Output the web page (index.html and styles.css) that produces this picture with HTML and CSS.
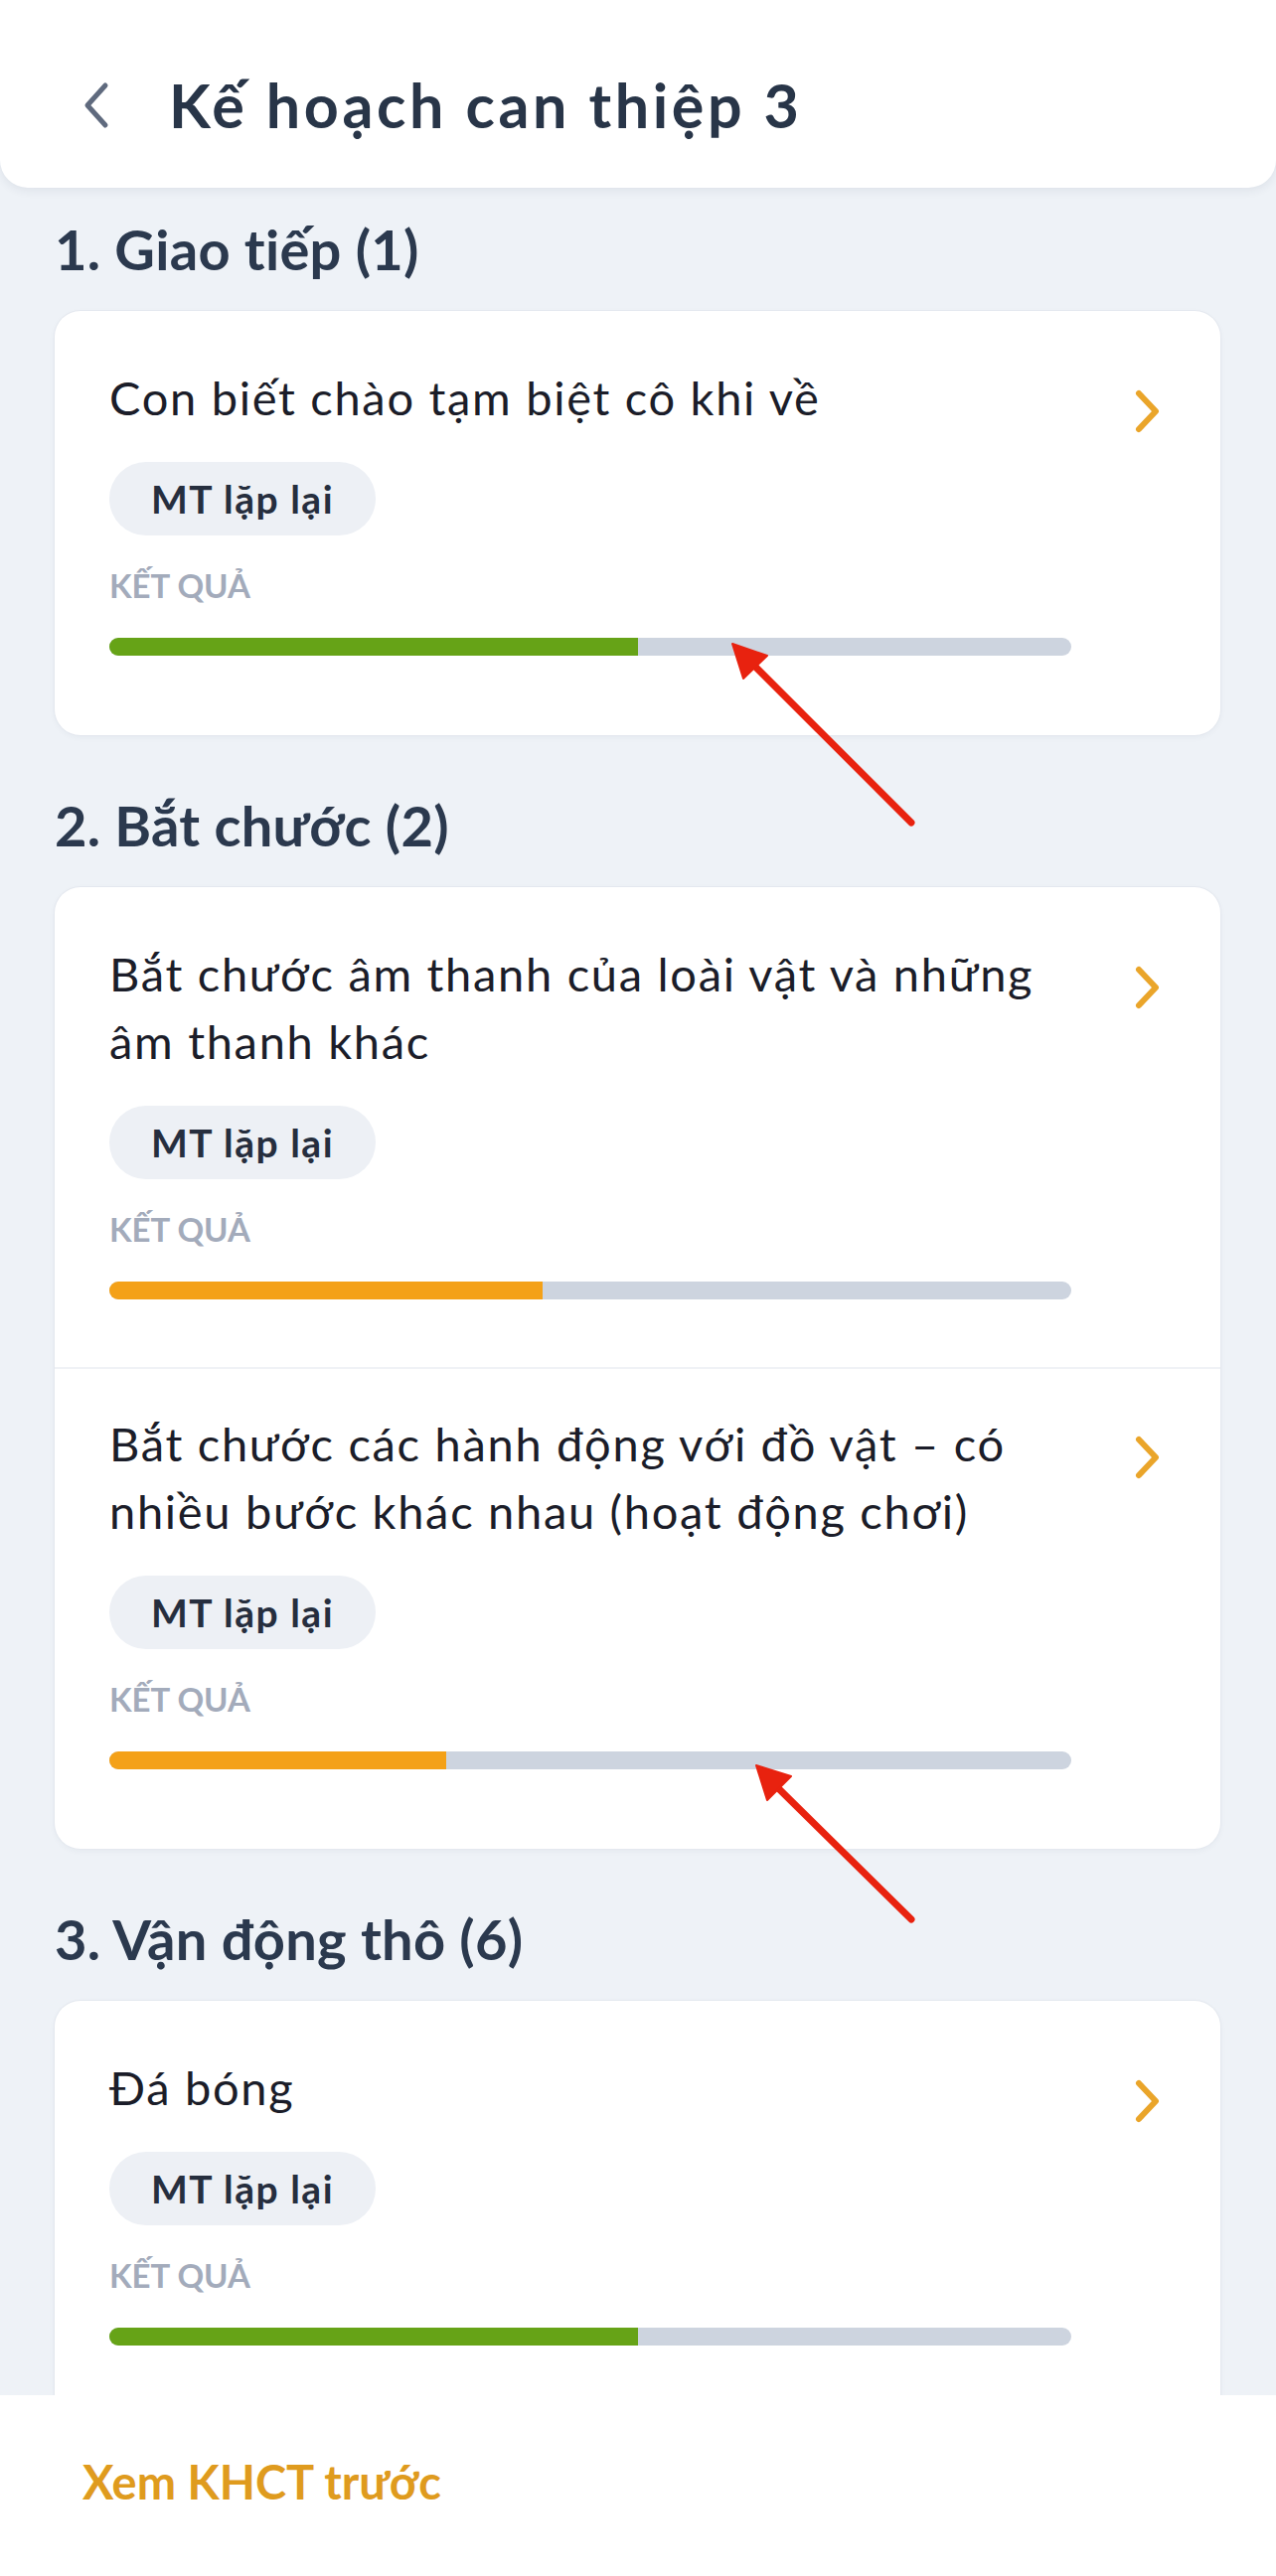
FILE: index.html
```html
<!DOCTYPE html>
<html lang="vi">
<head>
<meta charset="utf-8">
<title>Kế hoạch can thiệp 3</title>
<link rel="stylesheet" href="styles.css">
</head>
<body>
<div class="screen">
  <header class="topbar">
    <svg class="back" width="30" height="48" viewBox="0 0 30 48" aria-hidden="true">
      <path d="M24 4 L6 24 L24 44" fill="none" stroke="#5f6a7e" stroke-width="5" stroke-linecap="round" stroke-linejoin="round"/>
    </svg>
    <h1 class="title">Kế hoạch can thiệp 3</h1>
  </header>

  <main class="content">
    <section class="group">
      <h2 class="group-title">1. Giao tiếp (1)</h2>
      <div class="card">
        <div class="item">
          <div class="item-body">
            <p class="item-text">Con biết chào tạm biệt cô khi về</p>
            <span class="pill">MT lặp lại</span>
            <div class="label">KẾT QUẢ</div>
            <div class="bar"><div class="fill fill-green" style="width:55%"></div></div>
          </div>
          <svg class="chev" width="30" height="46" viewBox="0 0 30 46" aria-hidden="true">
            <path d="M6 5 L23 23 L6 41" fill="none" stroke="#eaa52a" stroke-width="6" stroke-linecap="round" stroke-linejoin="round"/>
          </svg>
        </div>
      </div>
    </section>

    <section class="group">
      <h2 class="group-title">2. Bắt chước (2)</h2>
      <div class="card">
        <div class="item">
          <div class="item-body">
            <p class="item-text">Bắt chước âm thanh của loài vật và những âm thanh khác</p>
            <span class="pill">MT lặp lại</span>
            <div class="label">KẾT QUẢ</div>
            <div class="bar"><div class="fill fill-orange" style="width:45%"></div></div>
          </div>
          <svg class="chev" width="30" height="46" viewBox="0 0 30 46" aria-hidden="true">
            <path d="M6 5 L23 23 L6 41" fill="none" stroke="#eaa52a" stroke-width="6" stroke-linecap="round" stroke-linejoin="round"/>
          </svg>
        </div>
        <div class="item">
          <div class="item-body">
            <p class="item-text">Bắt chước các hành động với đồ vật – có nhiều bước khác nhau (hoạt động chơi)</p>
            <span class="pill">MT lặp lại</span>
            <div class="label">KẾT QUẢ</div>
            <div class="bar"><div class="fill fill-orange" style="width:35%"></div></div>
          </div>
          <svg class="chev" width="30" height="46" viewBox="0 0 30 46" aria-hidden="true">
            <path d="M6 5 L23 23 L6 41" fill="none" stroke="#eaa52a" stroke-width="6" stroke-linecap="round" stroke-linejoin="round"/>
          </svg>
        </div>
      </div>
    </section>

    <section class="group">
      <h2 class="group-title">3. Vận động thô (6)</h2>
      <div class="card">
        <div class="item">
          <div class="item-body">
            <p class="item-text">Đá bóng</p>
            <span class="pill">MT lặp lại</span>
            <div class="label">KẾT QUẢ</div>
            <div class="bar"><div class="fill fill-green" style="width:55%"></div></div>
          </div>
          <svg class="chev" width="30" height="46" viewBox="0 0 30 46" aria-hidden="true">
            <path d="M6 5 L23 23 L6 41" fill="none" stroke="#eaa52a" stroke-width="6" stroke-linecap="round" stroke-linejoin="round"/>
          </svg>
        </div>
      </div>
    </section>
  </main>

  <footer class="bottombar">
    <span class="prev-link">Xem KHCT trước</span>
  </footer>

  <svg class="annotations" width="1284" height="2593" viewBox="0 0 1284 2593" aria-hidden="true">
    <g fill="#e8220f" stroke="#e8220f">
      <line x1="917" y1="828" x2="754" y2="665" stroke-width="7" stroke-linecap="round"/>
      <polygon points="737,648 748,683 772,660" stroke-width="2" stroke-linejoin="round"/>
      <line x1="917" y1="1932" x2="777" y2="1794" stroke-width="7" stroke-linecap="round"/>
      <polygon points="761,1777 772,1812 796,1788" stroke-width="2" stroke-linejoin="round"/>
    </g>
  </svg>
</div>
</body>
</html>
```

FILE: styles.css
```css
* { box-sizing: border-box; }

html, body {
  margin: 0;
  padding: 0;
  background: #eef2f7;
}

body {
  font-family: "Lato", "Noto Sans", "DejaVu Sans", sans-serif;
  color: #1b1d29;
}

.screen {
  position: relative;
  width: 1284px;
  height: 2593px;
  display: flex;
  flex-direction: column;
  overflow: hidden;
  background: #eef2f7;
}

.topbar {
  flex: 0 0 189px;
  display: flex;
  align-items: center;
  padding: 22px 0 0 82px;
  background: #ffffff;
  border-radius: 0 0 28px 28px;
  box-shadow: 0 3px 10px rgba(40, 55, 80, 0.08);
  position: relative;
  z-index: 2;
}

.back {
  flex: none;
  margin-right: 58px;
}

.title {
  margin: 0;
  font-size: 61px;
  font-weight: 700;
  line-height: 72px;
  color: #283548;
  letter-spacing: 3.6px;
}

.content {
  flex: 1 1 auto;
  overflow: hidden;
  padding: 0 56px 0 55px;
}

.group { margin-top: 59px; }
.group:first-child { margin-top: 30px; }

.group-title {
  margin: 0 0 30px 0;
  font-size: 56px;
  line-height: 64px;
  font-weight: 700;
  color: #2b394e;
  letter-spacing: 0.3px;
}

.card {
  background: #ffffff;
  border-radius: 26px;
  padding: 12px 0;
  box-shadow: 0 0 0 1px #e4e8ef, 0 2px 6px rgba(40, 55, 80, 0.05);
}

.item {
  display: flex;
  align-items: flex-start;
  padding: 41px 58px 68px 55px;
}

.item + .item {
  border-top: 2px solid #f0f2f6;
}

.item-body {
  flex: 0 0 968px;
  display: flex;
  flex-direction: column;
  align-items: flex-start;
}

.item-text {
  margin: 0;
  font-size: 47px;
  line-height: 68px;
  font-weight: 400;
  color: #1b1d29;
  letter-spacing: 1.7px;
}

.pill {
  margin-top: 31px;
  height: 74px;
  display: inline-flex;
  align-items: center;
  padding: 0 42px;
  border-radius: 37px;
  background: #edf0f5;
  font-size: 39px;
  font-weight: 700;
  color: #262e3e;
  letter-spacing: 1.5px;
}

.label {
  margin-top: 30px;
  font-size: 33px;
  line-height: 40px;
  font-weight: 700;
  color: #a3abbb;
}

.bar {
  margin-top: 33px;
  width: 968px;
  height: 18px;
  border-radius: 9px;
  background: #cdd4df;
  overflow: hidden;
}

.fill { height: 100%; }
.fill-green { background: #66a317; }
.fill-orange { background: #f4a118; }

.chev {
  flex: none;
  margin-left: auto;
  margin-top: 25px;
}

.bottombar {
  flex: 0 0 182px;
  background: #ffffff;
  display: flex;
  align-items: center;
  padding: 0 0 8px 83px;
  position: relative;
  z-index: 2;
}

.prev-link {
  font-size: 47px;
  font-weight: 700;
  color: #df9b1e;
}

.annotations {
  position: absolute;
  left: 0;
  top: 0;
  pointer-events: none;
  z-index: 5;
}
```
